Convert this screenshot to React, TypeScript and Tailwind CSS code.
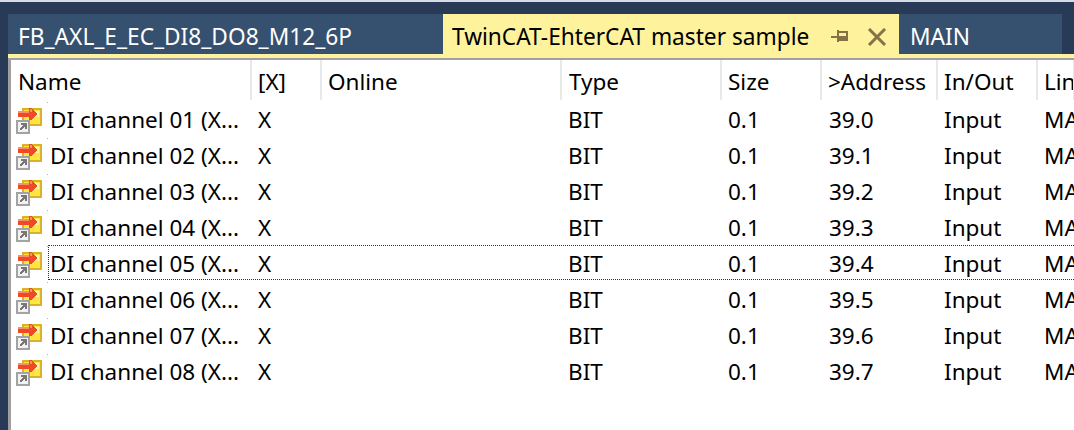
import React from 'react'

const font = "font-['Noto_Sans','Open_Sans',sans-serif]"

const columns = 'grid grid-cols-[241px_70px_240px_160px_100px_116px_100px_37px]'

const headers = ['Name', '[X]', 'Online', 'Type', 'Size', '>Address', 'In/Out', 'Linked to']

const channels = ['01', '02', '03', '04', '05', '06', '07', '08']

function VarIcon() {
  return (
    <svg width="28" height="26" viewBox="0 0 28 26" className="shrink-0 mt-[2px]" shapeRendering="crispEdges">
      <rect x="6" y="0" width="20" height="18" fill="#dcb02a" />
      <rect x="8" y="2" width="16" height="14" fill="#ffe53f" />
      <rect x="18" y="3" width="5" height="6" fill="#fff6a8" />
      <path d="M2 3h11V0h3l5 6-5 6h-3V9H2z" fill="#ee4a26" />
      <rect x="2" y="3" width="11" height="2" fill="#fb8f6c" />
      <rect x="14" y="1" width="2" height="3" fill="#fb8f6c" />
      <rect x="0" y="12" width="14" height="14" fill="#a3a3a3" />
      <rect x="2" y="14" width="10" height="10" fill="#f2f2f2" />
      <path d="M4 22l5-5M5 16h5v5" stroke="#777777" strokeWidth="2" fill="none" />
    </svg>
  )
}

function Row({ channel, index }: { channel: string; index: number }) {
  const selected = channel === '05'
  return (
    <div className={`${columns} h-9 relative items-center text-black whitespace-nowrap`}>
      <div className="flex items-center pl-[5px] h-9">
        <VarIcon />
        <span className="ml-[6px]">DI channel {channel} (X...</span>
      </div>
      <div className="pl-[6px]">X</div>
      <div />
      <div className="pl-[6px]">BIT</div>
      <div className="pl-[6px]">0.1</div>
      <div className="pl-[7px]">39.{index}</div>
      <div className="pl-[6px]">Input</div>
      <div className="pl-[6px] overflow-hidden">MAIN</div>
      <div className="absolute left-[36px] top-0 w-px h-px bg-[#40e0e0]" />
      {selected && (
        <div className="absolute left-[37px] right-[-2px] top-[-1px] bottom-[2px] border border-dotted border-[#333333]" />
      )}
    </div>
  )
}

export default function App() {
  return (
    <div className={`w-[1074px] h-[430px] overflow-hidden flex flex-col bg-[#293a56] ${font} text-[22.5px] leading-[28px]`}>
      <div className="h-[2px] bg-[#d6dbe9]" />
      <div className="h-[12px]" />
      <div className="flex h-[40px] pl-2 text-white text-[22.7px]">
        <div className="w-[435px] bg-[#36506f] pl-[10px] pt-[9px]">FB_AXL_E_EC_DI8_DO8_M12_6P</div>
        <div className="w-[456px] bg-[#fff29d] text-black pl-[9px] pt-[9px] flex items-start whitespace-nowrap">
          <span className="w-[379px] shrink-0">TwinCAT-EhterCAT master sample</span>
          <svg width="18" height="16" viewBox="0 0 18 16" className="mt-[6px] shrink-0" shapeRendering="crispEdges">
            <path d="M0 7h6V1h2v1h9v10H8v1H6V9H0zM8 4v3h7V4z" fill="#857347" fillRule="evenodd" />
          </svg>
          <svg width="20" height="18" viewBox="0 0 20 18" className="ml-[18px] mt-[5px] shrink-0">
            <path d="M2 1l16 16M18 1L2 17" stroke="#857347" strokeWidth="3" fill="none" />
          </svg>
        </div>
        <div className="w-[163px] bg-[#36506f] pl-[11px] pt-[9px]">MAIN</div>
      </div>
      <div className="h-[4px] ml-2 bg-[#fff29d]" />
      <div className="flex-1 flex pl-2">
        <div className="flex-1 border-l-[3px] border-t-2 border-[#a0a0a0] bg-white overflow-hidden">
          <div className={`${columns} h-[40px] text-black whitespace-nowrap`}>
            {headers.map((h, i) => (
              <div
                key={h}
                className={`h-[40px] pt-[8px] border-r-2 border-[#e8e8e8] overflow-hidden ${i === 3 ? 'pl-[7px]' : 'pl-[6px]'} ${i === 0 ? 'pl-[7px]' : ''}`}
              >
                {h}
              </div>
            ))}
          </div>
          <div className="pt-[2px]">
            {channels.map((c, i) => (
              <Row key={c} channel={c} index={i} />
            ))}
          </div>
        </div>
      </div>
    </div>
  )
}
